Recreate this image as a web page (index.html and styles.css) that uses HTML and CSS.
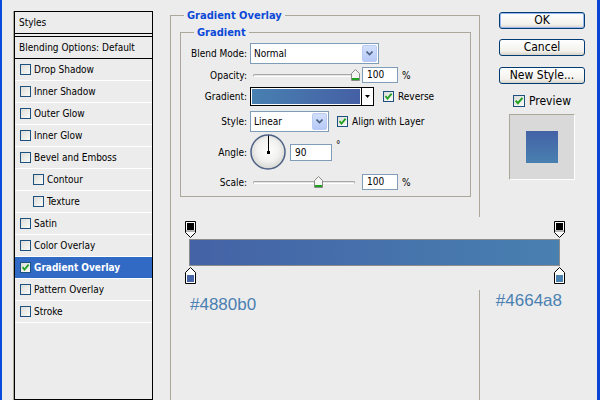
FILE: index.html
```html
<!DOCTYPE html>
<html lang="en">
<head>
    <meta charset="UTF-8">
    <title>Layer Style</title>
    <link rel="stylesheet" href="styles.css">
</head>
<body>
    <div class="dialog">
        <div class="styles-list">
            <div class="list-head">Styles</div>
            <div class="list-blend">Blending Options: Default</div>
            <div class="list-item"><span class="cb"></span>Drop Shadow</div>
            <div class="list-item"><span class="cb"></span>Inner Shadow</div>
            <div class="list-item"><span class="cb"></span>Outer Glow</div>
            <div class="list-item"><span class="cb"></span>Inner Glow</div>
            <div class="list-item"><span class="cb"></span>Bevel and Emboss</div>
            <div class="list-item sub"><span class="cb"></span>Contour</div>
            <div class="list-item sub"><span class="cb"></span>Texture</div>
            <div class="list-item"><span class="cb"></span>Satin</div>
            <div class="list-item"><span class="cb"></span>Color Overlay</div>
            <div class="list-item active"><span class="cb"><svg width="9" height="9" viewBox="0 0 9 9"><path d="M1.5 4.2 L3.5 6.5 L7.6 1.6" fill="none" stroke="#21a121" stroke-width="1.8"/></svg></span>Gradient Overlay</div>
            <div class="list-item"><span class="cb"></span>Pattern Overlay</div>
            <div class="list-item"><span class="cb"></span>Stroke</div>
        </div>

        <div class="main">
            <fieldset class="group outer">
                <legend>Gradient Overlay</legend>
                <fieldset class="group inner">
                    <legend>Gradient</legend>
                    <div class="row r-blend">
                        <span class="lbl">Blend Mode:</span>
                        <div class="select blend-select"><span>Normal</span>
                            <i class="drop"><svg width="7" height="5"><path d="M0.5 0.5 L3.5 3.5 L6.5 0.5" fill="none" stroke="#4d6185" stroke-width="1.6"/></svg></i>
                        </div>
                    </div>
                    <div class="row r-opacity">
                        <span class="lbl">Opacity:</span>
                        <div class="slider">
                            <div class="track"></div>
                            <svg class="thumb" style="left: 98px" width="9" height="12"><path d="M0.5 11.5 V4.5 L4.5 0.5 L8.5 4.5 V11.5 Z" fill="#f4f4f2" stroke="#8a8a8a"/><rect x="1" y="9" width="7" height="2" fill="#21a121"/></svg>
                        </div>
                        <div class="num">100</div>
                        <span class="unit">%</span>
                    </div>
                    <div class="row r-gradient">
                        <span class="lbl">Gradient:</span>
                        <div class="grad-pick">
                            <div class="grad-fill"></div>
                            <div class="grad-arrow"><svg width="5" height="3"><path d="M0 0 H5 L2.5 3 Z" fill="#000"/></svg></div>
                        </div>
                        <span class="cb check-reverse"><svg width="9" height="9" viewBox="0 0 9 9"><path d="M1.5 4.2 L3.5 6.5 L7.6 1.6" fill="none" stroke="#21a121" stroke-width="1.8"/></svg></span>
                        <span class="opt">Reverse</span>
                    </div>
                    <div class="row r-style">
                        <span class="lbl">Style:</span>
                        <div class="select style-select"><span>Linear</span>
                            <i class="drop"><svg width="7" height="5"><path d="M0.5 0.5 L3.5 3.5 L6.5 0.5" fill="none" stroke="#4d6185" stroke-width="1.6"/></svg></i>
                        </div>
                        <span class="cb check-align"><svg width="9" height="9" viewBox="0 0 9 9"><path d="M1.5 4.2 L3.5 6.5 L7.6 1.6" fill="none" stroke="#21a121" stroke-width="1.8"/></svg></span>
                        <span class="opt">Align with Layer</span>
                    </div>
                    <div class="row r-angle">
                        <span class="lbl">Angle:</span>
                        <svg class="dial" width="36" height="36">
                            <defs>
                                <radialGradient id="dialfill" cx="50%" cy="45%" r="55%">
                                    <stop offset="0" stop-color="#ffffff"/>
                                    <stop offset="0.6" stop-color="#f1f1ef"/>
                                    <stop offset="1" stop-color="#d6d6d2"/>
                                </radialGradient>
                            </defs>
                            <circle cx="18" cy="18" r="17" fill="url(#dialfill)" stroke="#4f6186" stroke-width="1.5"/>
                            <line x1="18.5" y1="1.5" x2="18.5" y2="18" stroke="#000" stroke-width="1"/>
                            <rect x="17" y="17" width="3" height="3" fill="#000"/>
                        </svg>
                        <div class="num angle-num">90</div>
                        <span class="deg">°</span>
                    </div>
                    <div class="row r-scale">
                        <span class="lbl">Scale:</span>
                        <div class="slider">
                            <div class="track"></div>
                            <svg class="thumb" style="left: 61px" width="9" height="12"><path d="M0.5 11.5 V4.5 L4.5 0.5 L8.5 4.5 V11.5 Z" fill="#f4f4f2" stroke="#8a8a8a"/><rect x="1" y="9" width="7" height="2" fill="#21a121"/></svg>
                        </div>
                        <div class="num">100</div>
                        <span class="unit">%</span>
                    </div>
                </fieldset>

                <div class="grad-editor">
                    <div class="stops">
                        <svg width="11" height="17"><path d="M0.5 0.5 H10.5 V11.5 L5.5 16.5 L0.5 11.5 Z" fill="#fff" stroke="#000"/><rect x="2" y="2" width="7" height="7" fill="#000"/><rect x="1" y="9" width="9" height="2" fill="#b4b4b4"/></svg>
                        <svg width="11" height="17"><path d="M0.5 0.5 H10.5 V11.5 L5.5 16.5 L0.5 11.5 Z" fill="#fff" stroke="#000"/><rect x="2" y="2" width="7" height="7" fill="#000"/><rect x="1" y="9" width="9" height="2" fill="#b4b4b4"/></svg>
                    </div>
                    <div class="grad-bar"></div>
                    <div class="stops">
                        <svg width="11" height="17"><path d="M5.5 0.5 L10.5 5.5 V16.5 H0.5 V5.5 Z" fill="#fff" stroke="#000"/><rect x="2" y="8" width="7" height="7" fill="#4664a8"/></svg>
                        <svg width="11" height="17"><path d="M5.5 0.5 L10.5 5.5 V16.5 H0.5 V5.5 Z" fill="#fff" stroke="#000"/><rect x="2" y="8" width="7" height="7" fill="#4880b0"/></svg>
                    </div>
                </div>
                <div class="hex-row">
                    <span class="hex hex-left">#4880b0</span>
                    <span class="hex hex-right">#4664a8</span>
                </div>
            </fieldset>
        </div>

        <div class="actions">
            <div class="btn default">OK</div>
            <div class="btn btn-cancel">Cancel</div>
            <div class="btn btn-new">New Style...</div>
            <div class="preview-row">
                <span class="cb cb-big"><svg width="10" height="10" viewBox="0 0 9 9"><path d="M1.5 4.2 L3.5 6.5 L7.6 1.6" fill="none" stroke="#21a121" stroke-width="1.8"/></svg></span>
                <span>Preview</span>
            </div>
            <div class="swatch">
                <div class="swatch-fill"></div>
            </div>
        </div>
    </div>
</body>
</html>
```

FILE: styles.css
```css
body {
    margin: 0;
    width: 600px;
    height: 400px;
    overflow: hidden;
    background-color: #ececec;
    font-family: "DejaVu Sans Condensed", "DejaVu Sans", sans-serif;
    font-stretch: condensed;
    font-size: 10px;
    color: #000;
}

.dialog {
    display: flex;
    height: 400px;
    box-sizing: border-box;
    border-left: 2px solid #0a4ade;
    border-right: 3px solid #0a46d6;
}

/* left column: list of effects */
.styles-list {
    flex: none;
    width: 139px;
    height: 389px;
    margin: 11px 0 0 12px;
    box-sizing: border-box;
    border: 1px solid #000;
    box-shadow: -1px 0 0 #aca899;
}

.list-head,
.list-blend {
    height: 21px;
    line-height: 21px;
    padding-left: 4px;
}

.list-head {
    border-bottom: 1px solid #000;
}

.list-blend {
    margin-top: 2px;
    border-top: 1px solid #000;
    border-bottom: 1px solid #000;
}

.list-item {
    display: flex;
    align-items: center;
    gap: 3px;
    height: 21px;
    padding-left: 5px;
    border-bottom: 1px solid #fff;
}

.list-item.sub {
    padding-left: 18px;
}

.list-item.active {
    background-color: #316ac5;
    color: #fff;
    font-weight: bold;
}

.cb {
    flex: none;
    display: inline-flex;
    align-items: center;
    justify-content: center;
    width: 11px;
    height: 11px;
    box-sizing: border-box;
    border: 1px solid #1c5180;
    background: linear-gradient(135deg, #dcdcd7, #fbfbf9);
}

.cb-big {
    width: 12px;
    height: 12px;
}

/* middle column */
.main {
    flex: none;
    margin: 9px 0 0 17px;
}

.group {
    margin: 0;
    padding: 0;
    min-width: 0;
    border: 1px solid #aca899;
}

.group legend {
    margin-left: 13px;
    padding: 0 3px;
    font-size: 11px;
    line-height: 13px;
    font-weight: bold;
    color: #0b49d8;
}

/* the outer group runs on below the window edge, so no bottom line */
.outer {
    width: 310px;
    height: 391px;
    box-sizing: border-box;
    border-bottom: none;
}

.inner {
    width: 291px;
    margin: 4px 0 0 9px;
    padding: 4px 0;
    box-sizing: border-box;
}

.row {
    display: flex;
    align-items: center;
}

.lbl {
    flex: none;
    width: 66px;
    margin-right: 3px;
    text-align: right;
}

.r-blend { height: 21px; }
.r-opacity { height: 22px; }
.r-gradient { height: 20px; margin-bottom: 4px; }
.r-style { height: 22px; }
.r-angle { height: 38px; margin-top: 1px; }
.r-scale { height: 20px; margin-top: 1px; }

.select {
    display: flex;
    align-items: center;
    justify-content: space-between;
    height: 21px;
    box-sizing: border-box;
    padding: 1px 1px 1px 3px;
    border: 1px solid #7f9db9;
    background-color: #fff;
}

.blend-select { width: 129px; }
.style-select { width: 79px; }

.drop {
    display: flex;
    align-items: center;
    justify-content: center;
    width: 15px;
    height: 17px;
    box-sizing: border-box;
    border: 1px solid #b9cbf3;
    border-radius: 2px;
    background: linear-gradient(#d3e0fd, #b6c9f6);
}

.slider {
    flex: none;
    position: relative;
    width: 107px;
    height: 12px;
    margin-left: 3px;
}

.track {
    position: absolute;
    left: 0;
    right: 5px;
    top: 5px;
    height: 3px;
    box-sizing: border-box;
    border: 1px solid #a8a8a8;
    border-bottom-color: #fff;
    border-radius: 2px;
    background-color: #e4e4e4;
}

.thumb {
    position: absolute;
    top: 0;
}

.num {
    flex: none;
    width: 36px;
    height: 16px;
    line-height: 14px;
    margin-left: 2px;
    box-sizing: border-box;
    padding-left: 4px;
    border: 1px solid #7f9db9;
    background-color: #fff;
}

.unit {
    margin-left: 4px;
}

.grad-pick {
    display: flex;
    width: 124px;
    height: 19px;
    box-sizing: border-box;
    border: 1px solid #000;
    background-color: #fff;
}

.grad-fill {
    flex: 1;
    margin: 1px;
    background: linear-gradient(to right, #4880b0, #4560a5);
}

.grad-arrow {
    display: flex;
    align-items: center;
    justify-content: center;
    width: 11px;
    border-left: 1px solid #000;
}

.check-reverse { margin-left: 9px; }
.check-align { margin-left: 8px; }

.opt {
    margin-left: 4px;
}

.dial {
    flex: none;
}

.angle-num {
    width: 42px;
    height: 17px;
    margin-left: 4px;
    line-height: 15px;
}

.deg {
    align-self: flex-start;
    margin: 6px 0 0 4px;
}

/* gradient editor under the settings */
.grad-editor {
    width: 380px;
    margin: 20px 0 0 14px;
    padding: 4px 0 6px;
    background-color: #ececec;
}

.stops {
    display: flex;
    justify-content: space-between;
    height: 17px;
}

.grad-bar {
    height: 27px;
    margin: 1px 5px 1px 4px;
    box-sizing: border-box;
    border: 1px solid #8c8c8c;
    background: linear-gradient(to right, #4462a6, #4880b0);
}

.hex-row {
    display: flex;
    justify-content: space-between;
    align-items: flex-start;
    width: 380px;
    margin-left: 14px;
}

.hex {
    font-family: "Liberation Sans", Arial, sans-serif;
    font-stretch: normal;
    font-size: 17px;
    line-height: 20px;
    color: #4a80b2;
}

.hex-left { margin: 5px 0 0 5px; }
.hex-right { margin: 1px 3px 0 0; }

/* right column */
.actions {
    flex: none;
    display: flex;
    flex-direction: column;
    align-items: center;
    width: 86px;
    margin: 12px 0 0 19px;
}

.btn {
    width: 86px;
    height: 17px;
    box-sizing: border-box;
    border: 1px solid #003c74;
    border-radius: 3px;
    background: linear-gradient(#fff, #f2f1ec 75%, #d8d3c8);
    font-size: 12px;
    line-height: 15px;
    text-align: center;
}

.btn.default {
    box-shadow: inset 0 0 0 1px #9ab8ee;
}

.btn-cancel { margin-top: 10px; }
.btn-new { margin-top: 11px; }

.preview-row {
    display: flex;
    align-items: center;
    gap: 4px;
    height: 12px;
    margin-top: 11px;
    font-size: 12px;
}

.swatch {
    display: flex;
    align-items: center;
    justify-content: center;
    width: 66px;
    height: 66px;
    margin-top: 7px;
    box-sizing: border-box;
    border: 1px solid #fff;
    border-top-color: #aca899;
    border-left-color: #aca899;
    background-color: #d9d9d9;
}

.swatch-fill {
    width: 32px;
    height: 32px;
    background: linear-gradient(#4462a6, #4880b0);
}
```
